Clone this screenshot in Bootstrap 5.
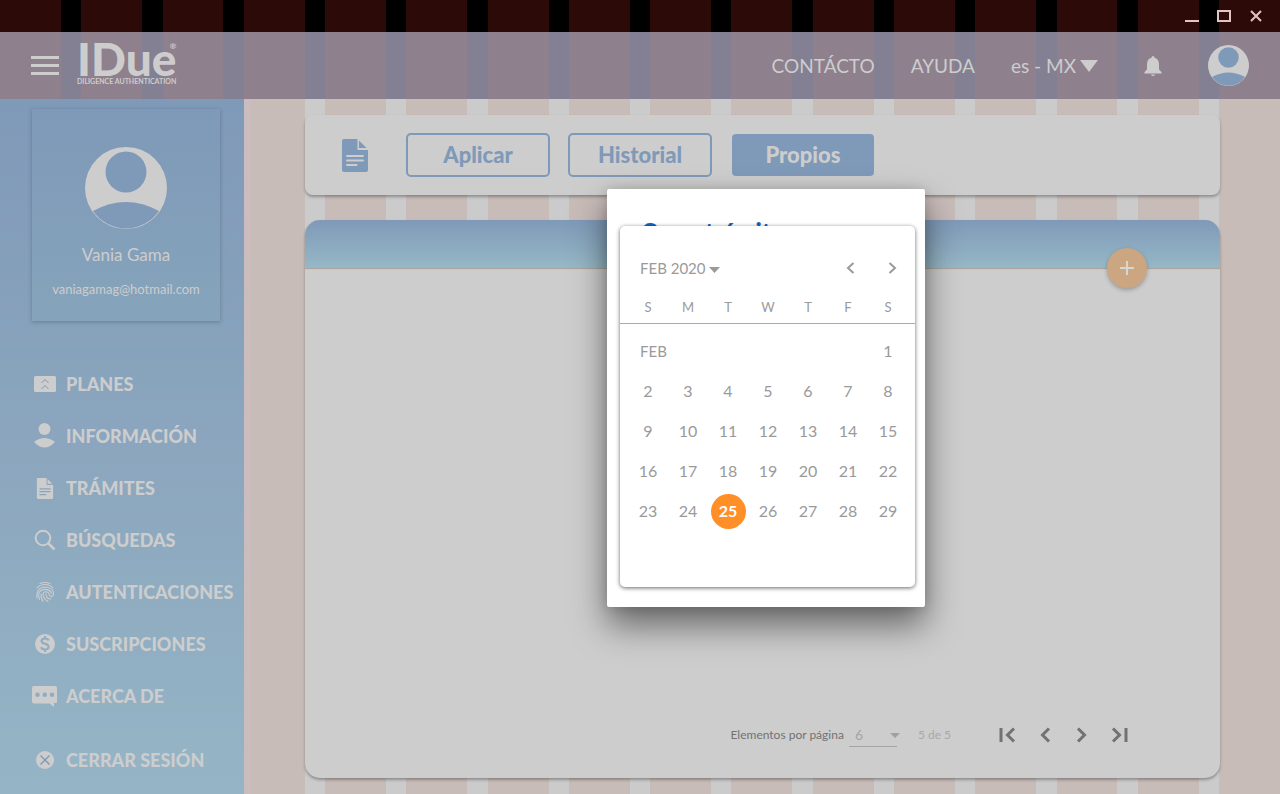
<!DOCTYPE html>
<html lang="es-MX">
<head>
<meta charset="utf-8">
<meta name="viewport" content="width=device-width, initial-scale=1">
<title>IDue</title>
<link rel="stylesheet" href="https://cdn.jsdelivr.net/npm/bootstrap@5.3.0/dist/css/bootstrap.min.css">
<style>
  :root { --ink: #cdcdcd; --blue: #7f99b8; }
  body {
    font-family: Lato, "Open Sans", sans-serif;
    color: var(--ink);
    background: repeating-linear-gradient(90deg, #c8bcb9 0 calc(100% * 3 / 63), #cbcbcb calc(100% * 3 / 63) calc(100% * 4 / 63));
  }
  button, select { font-family: inherit; }
  .titlebar {
    height: 32px; padding-right: 16px; gap: 16px;
    background: repeating-linear-gradient(90deg, #2c0a08 0 calc(100% * 3 / 63), #000 calc(100% * 3 / 63) calc(100% * 4 / 63));
  }
  .plain-btn { border: 0; background: none; color: inherit; padding: 0; display: inline-flex; align-items: center; justify-content: center; }
  .titlebar .plain-btn { width: 16px; height: 16px; color: #e6c3c3; }
  .topbar {
    height: 67px; padding: 0 31px;
    background: repeating-linear-gradient(90deg, #8e808d 0 calc(100% * 3 / 63), #828092 calc(100% * 3 / 63) calc(100% * 4 / 63));
  }
  .topbar a, .topbar .lang { font-size: 19px; color: var(--ink); text-decoration: none; line-height: 24px; }
  .top-links { gap: 36px; }
  .top-tools { gap: 46px; }
  .brand { position: relative; margin-left: 18px; padding-bottom: 6px; line-height: 1; }
  .brand-name { font-size: 46px; line-height: 36px; font-weight: 900; }
  .brand-sub { font-size: 7px; line-height: 8px; font-weight: 700; }
  .brand-reg { position: absolute; right: 0; top: 1px; font-size: 8px; line-height: 8px; font-weight: 700; }
  .side { width: 244px; padding-top: 10px; background: linear-gradient(#7f99b8, #8ca7be 55%, #95b5c6); box-shadow: 7px 0 0 #cbbdbd; }
  .profile { width: 188px; height: 212px; margin-left: 32px; padding-top: 38px; box-shadow: 0 1px 4px rgba(60, 80, 100, .45); background: linear-gradient(#7f99b8, #85a4bb); }
  .profile-name { font-size: 17px; line-height: 20px; margin-top: 16px; }
  .profile-mail { font-size: 13px; line-height: 16px; margin-top: 16px; }
  .menu { margin-top: 37px; }
  .menu a { height: 52px; padding-left: 32px; gap: 8px; color: var(--ink); text-decoration: none; font-size: 18px; font-weight: 900; white-space: nowrap; }
  .menu svg { width: 26px; height: 26px; flex: none; }
  .menu .logout { margin-top: 12px; }
  .content { padding: 16px 60px 16px 61px; gap: 25px; min-width: 0; }
  .tabs { height: 80px; padding-left: 37px; gap: 18px; background: #cdcdcd; border-radius: 8px; box-shadow: 0 2px 3px rgba(0, 0, 0, .3); }
  .tabs svg { margin-right: 20px; }
  .tab-btn { width: 144px; height: 44px; border: 2px solid var(--blue); border-radius: 5px; background: none; color: var(--blue); font-size: 22px; line-height: 24px; font-weight: 900; padding: 0; }
  .tab-btn.on { width: 142px; height: 42px; margin-left: 2px; background: var(--blue); color: var(--ink); border: 0; border-radius: 4px; }
  .board { background: #cdcdcd; border-radius: 15px; box-shadow: 0 2px 3px rgba(0, 0, 0, .3); }
  .board-head { height: 48px; border-radius: 15px 15px 0 0; background: linear-gradient(#7f99b8, #96b8c6); box-shadow: 0 1px 1px #aaa09a; }
  .fab { position: absolute; right: 73px; top: 28px; width: 40px; height: 40px; border-radius: 50%; background: #cca680; color: #d6d6d6; box-shadow: 0 2px 4px rgba(0, 0, 0, .25); }
  .pager { padding: 0 92px 31px 0; font-size: 12px; line-height: 16px; color: #727272; }
  .pager select { width: 48px; height: 24px; margin: 0 21px 0 5px; padding: 0 6px; border: 0; border-bottom: 1px solid #a4a4a4; background: none; appearance: none; color: #a4a4a4; font-size: 14px; }
  .pager .count { color: #a8a8a8; margin-right: 48px; }
  .pick { position: relative; }
  .pick svg { position: absolute; right: 18px; top: 10px; pointer-events: none; }
  .pager nav { gap: 21px; }
  .layer { position: absolute; inset: 2px 0 0 252px; pointer-events: none; }
  .dialog { position: relative; width: 318px; min-height: 418px; padding: 29px 34px; background: #fff; border-radius: 2px; box-shadow: 0 18px 34px rgba(0, 0, 0, .5), 0 0 12px rgba(0, 0, 0, .15); pointer-events: auto; }
  .dialog h1 { font-size: 24px; line-height: 28px; font-weight: 900; color: #1565c0; margin: 0; }
  .cal { position: absolute; inset: 37px 10px 20px 13px; padding-top: 22px; background: #fff; border-radius: 5px; color: #9a9a9a; box-shadow: 0 1px 4px rgba(0, 0, 0, .6); }
  .cal-top { height: 40px; margin-bottom: 4px; padding: 0 18px 0 20px; gap: 33px; font-size: 15px; }
  .cal-top .plain-btn { gap: 4px; }
  .cal table { width: 100%; table-layout: fixed; border-collapse: collapse; text-align: center; }
  .cal th { height: 31px; padding: 0; font-size: 13px; font-weight: 400; border-bottom: 1px solid #5fc4f2; }
  .cal td { height: 40px; padding: 0; font-size: 16px; }
  .cal tr > :first-child { padding-left: 8px; }
  .cal tr > :last-child { padding-right: 7px; }
  .cal tbody tr:first-child td { height: 48px; padding-top: 8px; }
  .cal tbody tr:first-child td:first-child { padding-left: 20px; text-align: left; font-size: 15px; }
  .day { width: 35px; height: 35px; border-radius: 50%; vertical-align: middle; }
  .day.on { background: #ff8f26; color: #fff; font-weight: 700; }
  .edge-l { width: 48px; }
  .edge-r { width: 47px; }
</style>
</head>
<body>
<svg width="0" height="0" class="position-absolute" aria-hidden="true">
  <symbol id="avatar" viewBox="0 0 82 82">
    <circle cx="41" cy="41" r="41" fill="#cdcdcd"/>
    <circle cx="41" cy="25" r="20.500" fill="#7f99b8"/>
    <path d="M8 64Q41 46 74 64A40 40 0 0 1 8 64Z" fill="#7f99b8"/>
  </symbol>
  <symbol id="doc" viewBox="0 0 26 33">
    <path d="M2 0H15.500V11H26V31Q26 33 24 33H2Q0 33 0 31V2Q0 0 2 0Z" fill="currentColor"/>
    <path d="M17 1.500L24.500 9H17Z" fill="currentColor"/>
    <path d="M5 17H21M5 21.500H21M5 26H14.500" stroke="var(--line)" stroke-width="2" stroke-linecap="round"/>
  </symbol>
</svg>

<div class="min-vh-100 d-flex flex-column position-relative">
  <div class="titlebar d-flex align-items-center justify-content-end">
    <button class="plain-btn" aria-label="Minimizar"><svg width="16" height="16"><path d="M1 13H15" stroke="currentColor" stroke-width="2"/></svg></button>
    <button class="plain-btn" aria-label="Maximizar"><svg width="16" height="16"><rect x="2" y="3" width="12" height="10" fill="none" stroke="currentColor" stroke-width="2"/></svg></button>
    <button class="plain-btn" aria-label="Cerrar"><svg width="16" height="16"><path d="M3 3L13 13M13 3L3 13" stroke="currentColor" stroke-width="2"/></svg></button>
  </div>

  <header class="topbar d-flex align-items-center">
    <button class="plain-btn" aria-label="Menú"><svg width="28" height="20"><path d="M0 1.500H28M0 9.500H28M0 17.500H28" stroke="currentColor" stroke-width="3"/></svg></button>
    <div class="brand"><div class="brand-name">IDue</div><div class="brand-sub">DILIGENCE AUTHENTICATION</div><span class="brand-reg">®</span></div>
    <div class="top-tools d-flex align-items-center ms-auto">
      <div class="top-links d-flex align-items-center">
        <a href="#">CONTÁCTO</a>
        <a href="#">AYUDA</a>
        <button class="plain-btn lang">es - MX<svg class="ms-1" width="18" height="12"><path d="M0 0H18L9 12Z" fill="currentColor"/></svg></button>
      </div>
      <button class="plain-btn" aria-label="Notificaciones"><svg width="18" height="20" viewBox="0 0 18 20"><path d="M9 0Q10.500 0 10.500 1.800Q15 3 15 8.500V13.500L17.500 16V17.500H.5V16L3 13.500V8.500Q3 3 7.500 1.800Q7.500 0 9 0ZM7 18.400H11Q10.500 20 9 20T7 18.400Z" fill="currentColor"/></svg></button>
      <button class="plain-btn" aria-label="Cuenta"><svg width="41" height="41"><use href="#avatar"/></svg></button>
    </div>
  </header>

  <div class="d-flex flex-fill">
    <aside class="side flex-shrink-0">
      <div class="profile text-center">
        <svg class="d-block mx-auto" width="82" height="82"><use href="#avatar"/></svg>
        <div class="profile-name">Vania Gama</div>
        <div class="profile-mail">vaniagamag@hotmail.com</div>
      </div>
      <nav class="menu d-flex flex-column">
        <a class="d-flex align-items-center" href="#"><svg viewBox="0 0 26 26"><rect x="2" y="5" width="22" height="16" rx="1.500" fill="currentColor"/><path d="M9.500 12L13 8.500L16.500 12M9.500 18L13 14.500L16.500 18" fill="none" stroke="#7f99b8"/></svg>PLANES</a>
        <a class="d-flex align-items-center" href="#"><svg viewBox="0 0 26 26"><circle cx="12.500" cy="6" r="6" fill="currentColor"/><path d="M2 19Q12.500 11 23 19Q12.500 30 2 19Z" fill="currentColor"/></svg>INFORMACIÓN</a>
        <a class="d-flex align-items-center" href="#" style="--line:#8ba5bd"><svg viewBox="0 0 26 26"><use href="#doc" x="4.500" y="3" width="17" height="21"/></svg>TRÁMITES</a>
        <a class="d-flex align-items-center" href="#"><svg viewBox="0 0 26 26" fill="none" stroke="currentColor" stroke-width="2"><circle cx="11" cy="11" r="7.300"/><path d="M16 16L22.500 22.500" stroke-width="2.500"/></svg>BÚSQUEDAS</a>
        <a class="d-flex align-items-center" href="#"><svg viewBox="0 0 26 26" fill="none" stroke="currentColor" stroke-width="1.100" stroke-linecap="round"><path d="M8 4.500Q13 2.500 18 4.500M5 9Q8 5.500 13 5.500T21 9M5 19Q4 8.500 13 8Q21 8.500 21.500 14Q21.500 17.500 19.500 17.500Q17.500 17.500 17 15Q16.500 12.800 13.500 12.800Q11 13 11 15.500Q11.500 20 16 22.500M7.500 20.500Q6 15 7.500 13Q9.500 10.300 13.500 10.400Q19 11 19.300 14.500M11 22.500Q8.500 18.500 9 15M14 15Q14 20 19 20"/></svg>AUTENTICACIONES</a>
        <a class="d-flex align-items-center" href="#"><svg viewBox="0 0 26 26"><circle cx="13" cy="13" r="10" fill="currentColor"/><path d="M16.500 9.500Q16 7.500 13 7.500T9.500 10Q9.500 12 13 12.800T16.600 16Q16.500 18.500 13 18.500T9.300 16.200M13 5V7.500M13 18.500V21" fill="none" stroke="#8facc1" stroke-width="2"/></svg>SUSCRIPCIONES</a>
        <a class="d-flex align-items-center" href="#"><svg viewBox="0 0 26 26"><path d="M2 3H23Q25 3 25 5V19Q25 20 24 20H22V24L17.500 20.500H2Q0 20.500 0 18.500V5Q0 3 2 3Z" fill="currentColor"/><g fill="#8facc1"><circle cx="5.500" cy="11.800" r="2.200"/><circle cx="12.800" cy="11.800" r="2.200"/><circle cx="20" cy="11.800" r="2.200"/></g></svg>ACERCA DE</a>
        <a class="d-flex align-items-center logout" href="#"><svg viewBox="0 0 26 26"><circle cx="13" cy="13" r="9" fill="currentColor"/><path d="M8.500 8.500L17.500 17.500M17.500 8.500L8.500 17.500" stroke="#7f99b8" stroke-width="1.400"/></svg>CERRAR SESIÓN</a>
      </nav>
    </aside>

    <main class="content flex-fill d-flex flex-column">
      <section class="tabs d-flex align-items-center">
        <svg width="26" height="33" style="--line:#cdcdcd;color:#7f99b8"><use href="#doc"/></svg>
        <button class="tab-btn">Aplicar</button>
        <button class="tab-btn">Historial</button>
        <button class="tab-btn on">Propios</button>
      </section>
      <section class="board flex-fill d-flex flex-column position-relative">
        <div class="board-head"></div>
        <button class="plain-btn fab" aria-label="Agregar"><svg width="14" height="14"><path d="M7 0V14M0 7H14" stroke="currentColor" stroke-width="2"/></svg></button>
        <div class="pager d-flex align-items-center justify-content-end mt-auto">
          <label for="per-page">Elementos por página</label>
          <div class="pick"><select id="per-page"><option>6</option></select><svg width="10" height="6"><path d="M0 0H10L5 5Z" fill="#a0a0a0"/></svg></div>
          <span class="count">5 de 5</span>
          <nav class="d-flex align-items-center" aria-label="Páginas">
            <button class="plain-btn" aria-label="Primera"><svg width="17" height="16" fill="none" stroke="currentColor" stroke-width="3"><path d="M2 1V15M15 1.500L8.500 8L15 14.500"/></svg></button>
            <button class="plain-btn" aria-label="Anterior"><svg width="16" height="16" fill="none" stroke="currentColor" stroke-width="3"><path d="M12 1.500L5.500 8L12 14.500"/></svg></button>
            <button class="plain-btn" aria-label="Siguiente"><svg width="16" height="16" fill="none" stroke="currentColor" stroke-width="3"><path d="M4 1.500L10.500 8L4 14.500"/></svg></button>
            <button class="plain-btn" aria-label="Última"><svg width="17" height="16" fill="none" stroke="currentColor" stroke-width="3"><path d="M15 1V15M2 1.500L8.500 8L2 14.500"/></svg></button>
          </nav>
        </div>
      </section>
    </main>
  </div>

  <div class="layer d-flex align-items-center justify-content-center">
    <div class="dialog" role="dialog" aria-labelledby="dlg-title">
      <h1 id="dlg-title">Crear trámite</h1>
      <div class="cal">
        <div class="cal-top d-flex align-items-center">
          <button class="plain-btn me-auto">FEB 2020<svg width="11" height="10"><path d="M0 4H11L5.500 10Z" fill="currentColor"/></svg></button>
          <button class="plain-btn" aria-label="Mes anterior"><svg width="9" height="12" fill="none" stroke="currentColor" stroke-width="2"><path d="M7.500 1L2 6L7.500 11"/></svg></button>
          <button class="plain-btn" aria-label="Mes siguiente"><svg width="9" height="12" fill="none" stroke="currentColor" stroke-width="2"><path d="M1.500 1L7 6L1.500 11"/></svg></button>
        </div>
        <table>
          <colgroup><col class="edge-l"><col span="5"><col class="edge-r"></colgroup>
          <thead><tr><th>S</th><th>M</th><th>T</th><th>W</th><th>T</th><th>F</th><th>S</th></tr></thead>
          <tbody>
            <tr><td colspan="6">FEB</td><td><button class="plain-btn day">1</button></td></tr>
            <tr><td><button class="plain-btn day">2</button></td><td><button class="plain-btn day">3</button></td><td><button class="plain-btn day">4</button></td><td><button class="plain-btn day">5</button></td><td><button class="plain-btn day">6</button></td><td><button class="plain-btn day">7</button></td><td><button class="plain-btn day">8</button></td></tr>
            <tr><td><button class="plain-btn day">9</button></td><td><button class="plain-btn day">10</button></td><td><button class="plain-btn day">11</button></td><td><button class="plain-btn day">12</button></td><td><button class="plain-btn day">13</button></td><td><button class="plain-btn day">14</button></td><td><button class="plain-btn day">15</button></td></tr>
            <tr><td><button class="plain-btn day">16</button></td><td><button class="plain-btn day">17</button></td><td><button class="plain-btn day">18</button></td><td><button class="plain-btn day">19</button></td><td><button class="plain-btn day">20</button></td><td><button class="plain-btn day">21</button></td><td><button class="plain-btn day">22</button></td></tr>
            <tr><td><button class="plain-btn day">23</button></td><td><button class="plain-btn day">24</button></td><td><button class="plain-btn day on">25</button></td><td><button class="plain-btn day">26</button></td><td><button class="plain-btn day">27</button></td><td><button class="plain-btn day">28</button></td><td><button class="plain-btn day">29</button></td></tr>
          </tbody>
        </table>
      </div>
    </div>
  </div>
</div>
<script src="https://cdn.jsdelivr.net/npm/bootstrap@5.3.0/dist/js/bootstrap.bundle.min.js"></script>
</body>
</html>
